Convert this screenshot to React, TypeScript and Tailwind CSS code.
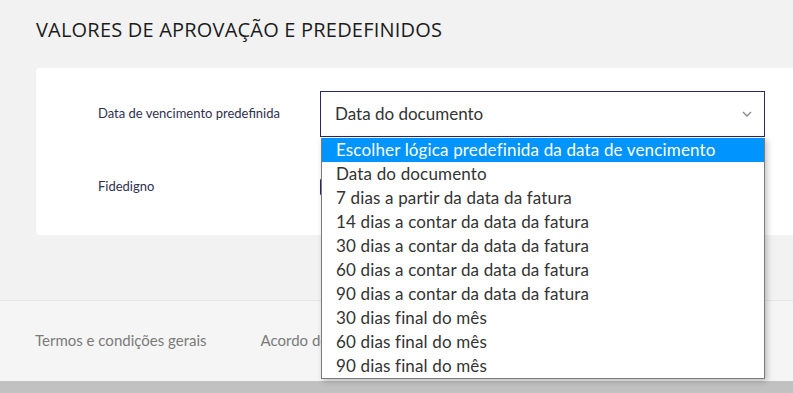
import React from "react";

const options = [
  "Escolher lógica predefinida da data de vencimento",
  "Data do documento",
  "7 dias a partir da data da fatura",
  "14 dias a contar da data da fatura",
  "30 dias a contar da data da fatura",
  "60 dias a contar da data da fatura",
  "90 dias a contar da data da fatura",
  "30 dias final do mês",
  "60 dias final do mês",
  "90 dias final do mês",
];

export default function App() {
  return (
    <div className="relative w-[793px] h-[393px] overflow-hidden bg-[#f2f2f2] flex flex-col" style={{ fontFamily: "Lato, 'Noto Sans', sans-serif" }}>
      <div className="pl-[36px] pt-[17px] h-[68px]">
        <h1 className="text-[20px] leading-[26px] text-[#1c1c1c] tracking-[0.2px]" style={{ fontFamily: "'Open Sans', sans-serif" }}>
          VALORES DE APROVAÇÃO E PREDEFINIDOS
        </h1>
      </div>
      <div className="ml-[36px] w-[800px] h-[167px] bg-white rounded-[4px] pl-[62px] pt-[23px] flex flex-col">
        <div className="flex items-center h-[46px]">
          <div className="w-[222px] text-[13px] text-[#2f2f4f]">Data de vencimento predefinida</div>
          <div className="w-[445px] h-[46px] border border-[#2b2766] flex items-center justify-between pl-[14px] pr-[12px]">
            <span className="text-[17px] text-[#333]">Data do documento</span>
            <svg width="10" height="6" viewBox="0 0 10 6" fill="none">
              <path d="M1 1l4 4 4-4" stroke="#8a8a8a" strokeWidth="1.4" />
            </svg>
          </div>
        </div>
        <div className="flex items-center h-[24px] mt-[38px]">
          <div className="w-[222px] text-[13px] text-[#2f2f4f]">Fidedigno</div>
          <div className="w-[20px] h-[18px] border-2 border-[#2b2766] rounded-[3px]" />
        </div>
      </div>
      <div className="mt-[65px] border-t border-[#e6e6e6] bg-[#f5f5f5] h-[81px] flex items-center pl-[35px] gap-[54px] text-[15px] text-[#7a7a7a] pb-[2px]">
        <span>Termos e condições gerais</span>
        <span>Acordo de processamento de dados</span>
      </div>
      <div className="h-[12px] bg-[#c1c1c1]" />

      <div className="absolute left-[321px] top-[138px] w-[444px] bg-white border border-[#7b7b7b] border-t-0 shadow-[2px_2px_6px_rgba(0,0,0,0.25)]">
        {options.map((o, i) => (
          <div
            key={o}
            className={
              "h-[24px] flex items-center pl-[14px] text-[17px] tracking-[0.15px] " +
              (i === 0 ? "bg-[#0094ff] text-white" : "text-[#333]")
            }
          >
            {o}
          </div>
        ))}
      </div>
    </div>
  );
}
